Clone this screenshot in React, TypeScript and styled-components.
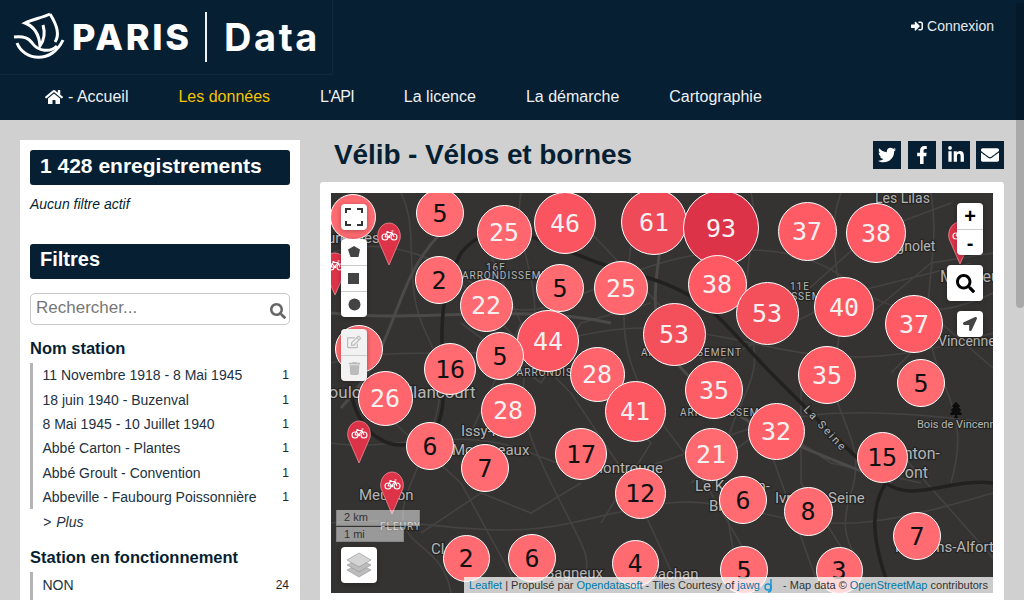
import React from 'react';
import styled, { createGlobalStyle } from 'styled-components';
import { FaHome, FaSignInAlt, FaTwitter, FaFacebookF, FaLinkedinIn, FaEnvelope, FaSearch, FaLocationArrow, FaRegEdit, FaTrash, FaTree } from 'react-icons/fa';

const Global = createGlobalStyle`
  html, body { margin: 0; padding: 0; height: 100%; overflow: hidden; background: #d0d0d0; }
  body { font-family: "Liberation Sans", Arial, sans-serif; color: #071f32; text-rendering: optimizeLegibility; }
  * { box-sizing: border-box; }
`;

const navy = '#061f33';

const Page = styled.div`
  position: relative;
  width: 1024px;
  height: 600px;
  overflow: hidden;
  background: #d0d0d0;
`;
const Scrollbar = styled.div`
  position: absolute;
  top: 3px;
  right: 0;
  width: 8px;
  height: 305px;
  background: rgba(0, 0, 0, 0.19);
  border-radius: 0 0 4px 4px;
  z-index: 20;
`;
const Header = styled.header`
  height: 120px;
  background: ${navy};
  display: flex;
  flex-direction: column;
`;
const TopRow = styled.div`
  height: 75px;
  display: flex;
  justify-content: space-between;
`;
const LogoBox = styled.a`
  width: 333px;
  height: 75px;
  border-right: 1px solid #0e2a40;
  border-bottom: 1px solid #0e2a40;
  display: flex;
  align-items: center;
  padding-left: 12px;
  color: #fff;
  font-family: Inter, "Liberation Sans", sans-serif;
  font-weight: 800;
`;
const LogoParis = styled.span`
  font-size: 36px;
  letter-spacing: 2.8px;
  margin-left: 6px;
  line-height: 1;
`;
const LogoRule = styled.i`
  width: 2px;
  height: 50px;
  background: #eef1f3;
  margin: 0 17px 0 13px;
`;
const LogoData = styled.span`
  font-size: 38px;
  font-weight: 700;
  letter-spacing: 2.6px;
  line-height: 1;
`;
const Login = styled.a`
  display: flex;
  align-items: center;
  gap: 4px;
  height: 14px;
  margin: 19px 30px 0 0;
  font-size: 14px;
  color: #e8eaec;
  svg { width: 12px; height: 12px; color: #fff; }
`;
const Nav = styled.nav`
  flex: 1;
  display: flex;
  align-items: flex-start;
  gap: 50px;
  padding: 13px 0 0 45px;
  font-size: 16px;
  line-height: 18px;
`;
const NavItem = styled.a<{ $active?: boolean; $tight?: boolean }>`
  display: flex;
  align-items: center;
  color: ${p => (p.$active ? '#f5c400' : '#eef0f2')};
  white-space: pre;
  letter-spacing: ${p => (p.$tight ? '-0.8px' : '0')};
  svg { width: 18px; height: 16px; color: #fff; margin-right: 5px; }
`;
const Body = styled.div`
  display: grid;
  grid-template-columns: 280px 684px;
  gap: 20px;
  padding: 20px 0 0 20px;
`;
const Side = styled.aside`
  background: #fff;
  padding: 10px;
  height: 520px;
  overflow: hidden;
`;
const Banner = styled.h2<{ $high?: boolean }>`
  margin: 0;
  height: 35px;
  padding: ${p => (p.$high ? '3px' : '4px')} 10px 0;
  border-radius: 3px;
  background: ${navy};
  color: #fff;
  font-size: ${p => (p.$high ? '20px' : '21px')};
  line-height: 24px;
  font-weight: 700;
`;
const NoFilter = styled.p`
  margin: 11px 0 31px;
  font-size: 14px;
  line-height: 16px;
  font-style: italic;
  height: 17px;
`;
const SearchBox = styled.div`
  margin-top: 14px;
  height: 32px;
  border: 1px solid #c8c8c8;
  border-radius: 5px;
  display: flex;
  align-items: center;
  justify-content: space-between;
  padding: 0 3px 3px 5px;
  color: #777;
  font-size: 17px;
  svg { width: 16px; height: 16px; color: #666; margin-top: 6px; }
`;
const FacetTitle = styled.h3`
  margin: 13px 0 6px;
  font-size: 16.5px;
  line-height: 20px;
  font-weight: 700;
`;
const FacetList = styled.ul`
  list-style: none;
  margin: -1px 0 0;
  padding: 0 1px 0 9.5px;
  border-left: 3px solid #b4b4b4;
  font-size: 14px;
  color: #1c3142;
`;
const FacetRow = styled.li`
  height: 24.4px;
  display: flex;
  justify-content: space-between;
  align-items: center;
  white-space: nowrap;
`;
const Count = styled.span`
  font-size: 12px;
  color: #222;
`;
const More = styled.div`
  margin: 4px 0 16px 13px;
  font-size: 14px;
  line-height: 18px;
  font-style: italic;
  height: 18px;
  color: #1c3142;
  display: flex;
  align-items: center;
  gap: 5px;
`;
const Main = styled.main`
  display: flex;
  flex-direction: column;
`;
const TitleRow = styled.div`
  height: 42px;
  display: flex;
  justify-content: space-between;
  align-items: flex-start;
`;
const Title = styled.h1`
  margin: -1px 0 0 14px;
  font-size: 28px;
  line-height: 32px;
  font-weight: 700;
  letter-spacing: -0.1px;
`;
const Shares = styled.div`
  display: flex;
  gap: 6px;
  margin-top: 1px;
`;
const Share = styled.a`
  width: 28px;
  height: 28px;
  background: ${navy};
  color: #fff;
  display: flex;
  align-items: center;
  justify-content: center;
  svg { width: 18px; height: 18px; }
  &:first-child { margin-right: 1px; }
`;
const MapCard = styled.section`
  background: #fff;
  border-radius: 3px 3px 0 0;
  padding: 11px;
  height: 420px;
`;
const MapArea = styled.div`
  position: relative;
  width: 662px;
  height: 400px;
  overflow: hidden;
  background: #343332;
`;
const Tiles = styled.svg`
  position: absolute;
  inset: 0;
  width: 662px;
  height: 400px;
`;
const ClusterDot = styled.div.attrs<{ $x: number; $y: number; $d: number; $bg: string }>(p => ({
  style: { left: p.$x - 331 - p.$d / 2, top: p.$y - 193 - p.$d / 2, width: p.$d, height: p.$d, background: p.$bg },
}))<{ $x: number; $y: number; $d: number; $bg: string; $light: boolean }>`
  position: absolute;
  border: 1px solid #fff;
  border-radius: 50%;
  display: flex;
  align-items: center;
  justify-content: center;
  font-family: "DejaVu Sans Mono", monospace;
  font-size: 25px;
  color: ${p => (p.$light ? '#f6f0f0' : '#111')};
`;
const Pin = styled.svg.attrs<{ $x: number; $y: number }>(p => ({
  style: { left: p.$x - 331 - 13, top: p.$y - 193 - 43 },
}))<{ $x: number; $y: number }>`
  position: absolute;
  width: 26px;
  height: 44px;
`;
const LeftTools = styled.div`
  position: absolute;
  left: 10px;
  top: 11px;
  display: flex;
  flex-direction: column;
  align-items: flex-start;
  gap: 9px;
`;
const RightTools = styled.div`
  position: absolute;
  right: 10px;
  top: 10px;
  display: flex;
  flex-direction: column;
  align-items: flex-end;
  gap: 10px;
`;
const Group = styled.div<{ $off?: boolean }>`
  width: 26px;
  border-radius: 4px;
  background: ${p => (p.$off ? '#f2f2f2' : '#fff')};
  box-shadow: 0 1px 5px rgba(0, 0, 0, 0.3);
  overflow: hidden;
  margin-top: ${p => (p.$off ? '3px' : '0')};
`;
const Tool = styled.div<{ $off?: boolean }>`
  width: 26px;
  height: 26px;
  display: flex;
  align-items: center;
  justify-content: center;
  color: ${p => (p.$off ? '#bbb' : '#444')};
  & + & { border-top: 1px solid #ccc; }
`;
const ZoomBtn = styled(Tool)`
  color: #000;
  font: 700 20px/26px "Liberation Sans", sans-serif;
`;
const BigBtn = styled.div`
  width: 36px;
  height: 36px;
  background: #fff;
  border-radius: 4px;
  display: flex;
  align-items: center;
  justify-content: center;
  box-shadow: 0 1px 5px rgba(0, 0, 0, 0.3);
  color: #000;
`;
const BottomLeft = styled.div`
  position: absolute;
  left: 5px;
  bottom: 10px;
  display: flex;
  flex-direction: column;
  align-items: flex-start;
`;
const Scale = styled.div<{ $w: number }>`
  width: ${p => p.$w}px;
  height: 16px;
  padding-left: 7px;
  background: rgba(255, 255, 255, 0.5);
  border: 1px solid rgba(120, 120, 120, 0.6);
  border-top-width: 0;
  font-size: 11px;
  line-height: 15px;
  color: #333;
  & + & { margin-top: 1px; height: 15px; }
`;
const LayerBtn = styled(BigBtn)`
  margin: 5px 0 0 5px;
`;
const Attribution = styled.div`
  position: absolute;
  right: 0;
  bottom: 0;
  height: 16px;
  padding: 0 5px;
  background: rgba(255, 255, 255, 0.75);
  font-size: 11px;
  line-height: 16px;
  color: #333;
  white-space: pre;
  display: flex;
  align-items: center;
`;
const AttrLink = styled.a`
  color: #0078a8;
`;

type C = [number, number, number, number | ''];
const clusters: C[] = [
  [353, 217, 46, ''], [359, 349, 48, ''], [440, 213, 48, 5], [504, 232, 55, 25], [565, 223, 62, 46], [654, 222, 66, 61],
  [721, 228, 76, 93], [807, 231, 59, 37], [876, 233, 60, 38], [439, 280, 48, 2], [486, 305, 53, 22], [560, 288, 48, 5],
  [621, 288, 54, 25], [717, 284, 59, 38], [674, 334, 63, 53], [767, 313, 63, 53], [844, 307, 60, 40], [914, 324, 58, 37],
  [548, 341, 62, 44], [500, 356, 48, 5], [450, 369, 52, 16], [597, 374, 55, 28], [385, 398, 55, 26], [508, 410, 55, 28],
  [635, 411, 61, 41], [714, 390, 58, 35], [827, 375, 58, 35], [921, 383, 48, 5], [776, 431, 57, 32], [711, 454, 53, 21],
  [882, 457, 51, 15], [430, 446, 48, 6], [485, 468, 48, 7], [581, 454, 52, 17], [640, 493, 51, 12], [743, 500, 48, 6],
  [808, 511, 49, 8], [917, 536, 48, 7], [466, 558, 47, 2], [532, 558, 48, 6], [635, 563, 47, 4], [744, 570, 48, 5], [839, 570, 47, 3],
];
const stops: [number, number, number, number][] = [[20, 255, 107, 113], [38, 255, 90, 100], [61, 238, 74, 88], [93, 220, 51, 73]];
const shade = (n: number): string => {
  if (n <= 20) return 'rgb(255,107,113)';
  for (let i = 1; i < stops.length; i++) {
    if (n <= stops[i][0]) {
      const a = stops[i - 1], b = stops[i], t = (n - a[0]) / (b[0] - a[0]);
      return `rgb(${[1, 2, 3].map(k => Math.round(a[k] + (b[k] - a[k]) * t)).join(',')})`;
    }
  }
  return 'rgb(220,51,73)';
};

const roads = [
  'M0 60 C60 40 120 70 160 105 S260 90 330 70 S470 50 520 90 S620 120 662 100',
  'M70 0 C90 40 70 90 95 140 S110 220 80 290 S110 340 120 400',
  'M190 0 C180 50 215 90 200 150 S190 230 225 300 S260 360 250 400',
  'M300 0 C310 50 280 110 300 170 S345 240 380 300 S420 370 440 400',
  'M420 0 C430 40 405 90 420 140 S400 210 395 260 S400 340 410 400',
  'M510 0 C490 50 520 100 505 160 S540 240 520 300 S540 360 530 400',
  'M600 0 C610 60 590 100 600 150 S640 220 620 290',
  'M0 170 C70 150 150 170 220 150 S330 130 420 150 S560 170 662 140',
  'M0 250 C60 260 130 230 200 260 S310 280 380 250 S510 210 662 230',
  'M0 330 C80 320 150 350 240 330 S350 300 430 320 S560 330 662 300',
  'M340 125 L440 260 L490 400',
  'M120 80 L240 200 L300 290 L350 400',
  'M440 130 L540 40 L620 10',
  'M355 140 L260 40 L240 0',
  'M375 175 L520 100 L640 70',
  'M560 250 L640 340 L662 365',
  'M30 200 L130 290 L190 400',
  'M150 40 L190 130 L140 240',
  'M250 170 L320 250 L270 330',
  'M470 170 L470 290 L520 370',
  'M360 290 L440 230 L500 270 L590 290',
  'M130 130 L210 190 L250 130 L320 110',
  'M540 120 L600 70 L662 60',
  'M90 340 L150 300 L200 320 L250 290',
  'M560 180 L610 130 L662 175',
];
const labels: [string, number, number, number][] = [
  ['Les Lilas', 875, 203, 14], ['Bagnolet', 880, 251, 14], ['Montreuil', 940, 282, 16], ['Vincennes', 938, 346, 14],
  ['Bois de Vincennes', 917, 428, 11], ['Charenton-', 862, 459, 16], ['le-Pont', 878, 478, 16], ['Maisons-Alfort', 895, 552, 15],
  ['Ivry-sur-Seine', 775, 503, 15], ['Le Kremlin-', 695, 491, 15], ['Bicêtre', 709, 511, 15], ['Cachan', 648, 579, 15],
  ['Bagneux', 545, 578, 15], ['Montrouge', 590, 473, 15], ['Issy-les-', 461, 436, 15], ['Moulineaux', 452, 455, 15],
  ['Meudon', 359, 500, 15], ['Clamart', 431, 554, 15], ['Boulogne-Billancourt', 318, 398, 17], ['Suresnes', 318, 243, 15],
];
const caps: [string, number, number][] = [
  ['16E', 486, 271], ['ARRONDISSEMENT', 462, 279], ['11E', 790, 290], ['ARRONDISSEMENT', 742, 300],
  ['7E ARRONDISSEMENT', 500, 376], ['ARRONDISSEMENT', 680, 416], ['ARRONDISSEMENT', 641, 356], ['FLEURY', 380, 530],
];

const pins: [number, number][] = [[389, 265], [335, 295], [359, 463], [392, 514], [960, 264]];

const MapPin = ({ x, y }: { x: number; y: number }) => (
  <Pin $x={x} $y={y} viewBox="0 0 26 44">
    <path d="M13 43 L2.200 18 C0 10 5 1 13 1 S26 10 23.800 18 Z" fill="#dc3349" stroke="#f08a94" strokeWidth="0.8" />
    <g fill="none" stroke="#fff" strokeWidth="1.100">
      <circle cx="9" cy="15" r="3" />
      <circle cx="18" cy="15" r="3" />
      <path d="M9 15 L11 10.500 H16 L18 15 M12.500 15 L16 10.500 M9 15 H12.500 M10.500 9.500 H12.500 M15.500 9 H17.500" />
    </g>
    <circle cx="13" cy="15" r="1.200" fill="#fff" />
  </Pin>
);

const rows = [
  '11 Novembre 1918 - 8 Mai 1945', '18 juin 1940 - Buzenval', '8 Mai 1945 - 10 Juillet 1940',
  'Abbé Carton - Plantes', 'Abbé Groult - Convention', 'Abbeville - Faubourg Poissonnière',
];

export default function App() {
  return (
    <Page>
      <Global />
      <Scrollbar />
      <Header>
        <TopRow>
          <LogoBox>
            <svg width="54" height="50" viewBox="12 13 54 50" fill="none" stroke="#fff" strokeWidth="3" strokeLinejoin="miter">
              <path d="M50 15 C42 19 33 20 25 24 C33 27 39 33 40 47 C45 40 45 33 43 26 M50 15 C57 26 60 36 55 43" />
              <path d="M14 38 C24 37 29 39 33 45 C38 52 50 54 57 47" />
              <path d="M17 44 C24 62 52 65 63 41" />
            </svg>
            <LogoParis>PARIS</LogoParis>
            <LogoRule />
            <LogoData>Data</LogoData>
          </LogoBox>
          <Login><FaSignInAlt />Connexion</Login>
        </TopRow>
        <Nav>
          <NavItem><FaHome />- Accueil</NavItem>
          <NavItem $active>Les données</NavItem>
          <NavItem $tight>L'API</NavItem>
          <NavItem>La licence</NavItem>
          <NavItem>La démarche</NavItem>
          <NavItem>Cartographie</NavItem>
        </Nav>
      </Header>
      <Body>
        <Side>
          <Banner>1 428 enregistrements</Banner>
          <NoFilter>Aucun filtre actif</NoFilter>
          <Banner $high>Filtres</Banner>
          <SearchBox>Rechercher...<FaSearch /></SearchBox>
          <FacetTitle>Nom station</FacetTitle>
          <FacetList>
            {rows.map(r => <FacetRow key={r}>{r}<Count>1</Count></FacetRow>)}
          </FacetList>
          <More><span>&gt;</span>Plus</More>
          <FacetTitle>Station en fonctionnement</FacetTitle>
          <FacetList><FacetRow>NON<Count>24</Count></FacetRow><FacetRow /></FacetList>
        </Side>
        <Main>
          <TitleRow>
            <Title>Vélib - Vélos et bornes</Title>
            <Shares>
              <Share><FaTwitter /></Share>
              <Share><FaFacebookF /></Share>
              <Share><FaLinkedinIn /></Share>
              <Share><FaEnvelope /></Share>
            </Shares>
          </TitleRow>
          <MapCard>
            <MapArea>
              <Tiles viewBox="0 0 662 400">
                <g fill="none" stroke="#444342" strokeWidth="1.600">
                  {roads.map(d => <path key={d} d={d} />)}
                </g>
                <g fill="none" stroke="#4b4a49" strokeWidth="3">
                  <path d="M10 215 C70 150 60 90 110 40 M330 0 C340 60 300 120 350 175 S460 250 560 290" />
                  <path d="M0 120 C90 130 190 110 280 130" />
                </g>
                <g fill="none" stroke="#222120" strokeWidth="3.500" strokeLinecap="round">
                  <path d="M20 200 C30 250 70 265 100 240 S90 130 130 60 M130 60 C170 10 220 60 300 80 S390 130 445 185 S530 270 555 290 S620 285 662 290" />
                  <path d="M555 290 C535 320 545 360 560 400" />
                </g>
                <FaTree x="617" y="209" width="16" height="16" color="#0c0c0c" />
                <g fontFamily="Roboto, sans-serif" fill="#b4b4b4" stroke="#262524" strokeWidth="2.500" style={{ paintOrder: 'stroke' }}>
                  {labels.map(([t, x, y, s]) => <text key={t} x={x - 331} y={y - 193} fontSize={s}>{t}</text>)}
                  {caps.map(([t, x, y]) => <text key={t + x} x={x - 331} y={y - 193} fontSize="10" letterSpacing="1">{t}</text>)}
                  <text x="472" y="217" fontSize="11" letterSpacing="2" transform="rotate(47 472 217)">La Seine</text>
                </g>
              </Tiles>
              {pins.map(([x, y]) => <MapPin key={x} x={x} y={y} />)}
              {clusters.map(([x, y, d, n]) => (
                <ClusterDot key={`${x}-${y}`} $x={x} $y={y} $d={d} $bg={shade(n === '' ? 10 : n)} $light={n !== '' && n > 20}>{n}</ClusterDot>
              ))}
              <LeftTools>
                <Group>
                  <Tool>
                    <svg width="20" height="20" viewBox="0 0 20 20" fill="none" stroke="#333" strokeWidth="2"><path d="M2 6V2h5M13 2h5v4M18 14v4h-5M7 18H2v-4" /></svg>
                  </Tool>
                </Group>
                <Group>
                  <Tool><svg width="14" height="14" viewBox="0 0 14 14"><path d="M7 1l6 3.500-1.500 7.500h-8L1 4.500z" fill="#444" /></svg></Tool>
                  <Tool><svg width="12" height="12" viewBox="0 0 12 12"><rect width="11" height="11" fill="#444" /></svg></Tool>
                  <Tool><svg width="13" height="13" viewBox="0 0 13 13"><circle cx="6.500" cy="6.500" r="6" fill="#444" /></svg></Tool>
                </Group>
                <Group $off>
                  <Tool $off><FaRegEdit size={14} /></Tool>
                  <Tool $off><FaTrash size={13} /></Tool>
                </Group>
              </LeftTools>
              <RightTools>
                <Group>
                  <ZoomBtn>+</ZoomBtn>
                  <ZoomBtn>-</ZoomBtn>
                </Group>
                <BigBtn><FaSearch size={19} /></BigBtn>
                <Group><Tool><FaLocationArrow size={14} /></Tool></Group>
              </RightTools>
              <BottomLeft>
                <Scale $w={84}>2 km</Scale>
                <Scale $w={68}>1 mi</Scale>
                <LayerBtn>
                  <svg width="28" height="28" viewBox="0 0 28 28" fill="#bdbdbd" stroke="#8e8e8e" strokeWidth="0.6">
                    <path d="M14 13l12 6-12 7-12-7z" />
                    <path d="M14 8l12 6-12 7-12-7z" />
                    <path d="M14 2l12 7-12 7-12-7z" fill="#d4d4d4" />
                  </svg>
                </LayerBtn>
              </BottomLeft>
              <Attribution>
                <AttrLink>Leaflet</AttrLink> | Propulsé par <AttrLink>Opendatasoft</AttrLink> - Tiles Courtesy of <AttrLink>jawg</AttrLink>
                <svg width="20" height="16" viewBox="0 0 20 16" fill="none" stroke="#1795d8" strokeWidth="1.500"><circle cx="8" cy="10" r="3" /><path d="M11 2v10c0 2-1 3-3 3" /></svg>
                {' - Map data © '}<AttrLink>OpenStreetMap</AttrLink> contributors
              </Attribution>
            </MapArea>
          </MapCard>
        </Main>
      </Body>
    </Page>
  );
}
